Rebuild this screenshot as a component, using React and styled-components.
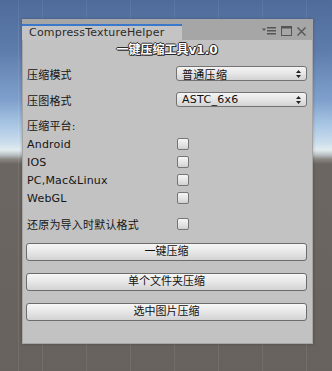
import React from 'react';
import styled, { createGlobalStyle } from 'styled-components';

const font = `"DejaVu Sans", "Noto Sans CJK SC", sans-serif`;

const GlobalStyle = createGlobalStyle`
    html, body {
        margin: 0;
        width: 332px;
        height: 371px;
        overflow: hidden;
    }
    body {
        font-family: ${font};
        background:
            repeating-linear-gradient(90deg, rgba(255,255,255,0.07) 0 1px, transparent 1px 44px) 42px 0,
            linear-gradient(180deg, #4e6b9a 0px, #5e7cab 50px, #7fa0cc 100px, #a9c6e4 125px, #c9dcec 142px, #e2ecef 150px, #b9c0c3 155px, #8c8884 159px, #6c6662 164px, #67625e 371px);
    }
`;

const Scene = styled.div`
    box-sizing: border-box;
    height: 371px;
    padding: 19px 0 0 22px;
`;

const Window = styled.div`
    width: 291px;
    height: 325px;
    display: flex;
    flex-direction: column;
    background: #a6a6a6;
    box-shadow: 0 0 3px rgba(0,0,0,0.25);
`;

const TabBar = styled.div`
    height: 21px;
    display: flex;
    align-items: flex-end;
    justify-content: space-between;
`;

const Tab = styled.div`
    box-sizing: border-box;
    width: 160px;
    height: 16px;
    border-top: 2px solid #3b78cc;
    background: #c4c4c4;
    padding-left: 7px;
    font-size: 11px;
    letter-spacing: 0.2px;
    line-height: 14px;
    color: #2b2b2b;
`;

const TabIcons = styled.div`
    display: flex;
    align-items: center;
    gap: 5px;
    padding: 0 7px 4px 0;
    color: #555;
`;

const Content = styled.div`
    flex: 1;
    margin: 0 1px 1px 1px;
    padding: 0 5px 0 4px;
    background: #c2c2c2;
    display: flex;
    flex-direction: column;
`;

const Title = styled.div`
    height: 20px;
    line-height: 20px;
    text-align: center;
    font-size: 12px;
    font-weight: bold;
    color: #fff;
    text-shadow: 1px 0 0 #2a2a2a, -1px 0 0 #2a2a2a, 0 1px 0 #2a2a2a, 0 -1px 0 #2a2a2a, 1px 1px 0 #2a2a2a;
`;

const Row = styled.div`
    display: flex;
    align-items: center;
    height: ${p => p.h || 18}px;
    margin-top: ${p => p.mt || 0}px;
    font-size: 11px;
    color: #151515;
`;

const Label = styled.div`
    width: 149px;
    letter-spacing: 0.2px;
`;

const Select = styled.div`
    box-sizing: border-box;
    width: 131px;
    height: 15px;
    display: flex;
    align-items: center;
    justify-content: space-between;
    padding: 0 5px 0 5px;
    border: 1px solid #737373;
    border-radius: 3px;
    background: linear-gradient(180deg, #f4f4f4 0%, #e6e6e6 50%, #d2d2d2 100%);
    font-size: 11px;
    letter-spacing: 0.3px;
    color: #111;
`;

const Checkbox = styled.div`
    box-sizing: border-box;
    width: 12px;
    height: 12px;
    margin-left: 1px;
    border: 1px solid #767676;
    border-radius: 2px;
    background: linear-gradient(180deg, #f6f6f6 0%, #e2e2e2 60%, #d0d0d0 100%);
`;

const Button = styled.div`
    box-sizing: border-box;
    height: 18px;
    margin: ${p => p.mt}px 0 0 -1px;
    border: 1px solid #6c6c6c;
    border-radius: 3px;
    background: linear-gradient(180deg, #f7f7f7 0%, #e8e8e8 45%, #d3d3d3 100%);
    text-align: center;
    line-height: 16px;
    font-size: 11px;
    color: #111;
`;

const Arrows = () => (
    <svg width="5" height="8" viewBox="0 0 5 8">
        <path d="M2.5 0 L5 3 L0 3 Z M2.5 8 L5 5 L0 5 Z" fill="#222" />
    </svg>
);

const MenuIcon = () => (
    <svg width="14" height="8" viewBox="0 0 14 8">
        <path d="M0 1.5 L4 1.5 L2 4 Z" fill="#555" />
        <rect x="5" y="0" width="9" height="1.5" fill="#555" />
        <rect x="5" y="3" width="9" height="1.5" fill="#555" />
        <rect x="5" y="6" width="9" height="1.5" fill="#555" />
    </svg>
);

const MaxIcon = () => (
    <svg width="11" height="10" viewBox="0 0 11 10">
        <rect x="0.5" y="0.5" width="10" height="9" fill="none" stroke="#555" />
        <rect x="0.5" y="0.5" width="10" height="2" fill="#555" />
    </svg>
);

const CloseIcon = () => (
    <svg width="9" height="9" viewBox="0 0 9 9">
        <path d="M0.5 0.5 L8.5 8.5 M8.5 0.5 L0.5 8.5" stroke="#555" strokeWidth="1.4" />
    </svg>
);

const platforms = ['Android', 'IOS', 'PC,Mac&Linux', 'WebGL'];

export default function App() {
    return (
        <>
            <GlobalStyle />
            <Scene>
                <Window>
                    <TabBar>
                        <Tab>CompressTextureHelper</Tab>
                        <TabIcons>
                            <MenuIcon />
                            <MaxIcon />
                            <CloseIcon />
                        </TabIcons>
                    </TabBar>
                    <Content>
                        <Title>一键压缩工具v1.0</Title>
                        <Row mt={6} h={15}>
                            <Label>压缩模式</Label>
                            <Select>普通压缩<Arrows /></Select>
                        </Row>
                        <Row mt={11} h={15}>
                            <Label>压图格式</Label>
                            <Select>ASTC_6x6<Arrows /></Select>
                        </Row>
                        <Row mt={10} h={16}>
                            <Label>压缩平台:</Label>
                        </Row>
                        {platforms.map((p, i) => (
                            <Row key={p} mt={i === 0 ? 2 : 0}>
                                <Label>{p}</Label>
                                <Checkbox />
                            </Row>
                        ))}
                        <Row mt={8}>
                            <Label>还原为导入时默认格式</Label>
                            <Checkbox />
                        </Row>
                        <Button mt={10}>一键压缩</Button>
                        <Button mt={12}>单个文件夹压缩</Button>
                        <Button mt={12}>选中图片压缩</Button>
                    </Content>
                </Window>
            </Scene>
        </>
    );
}
